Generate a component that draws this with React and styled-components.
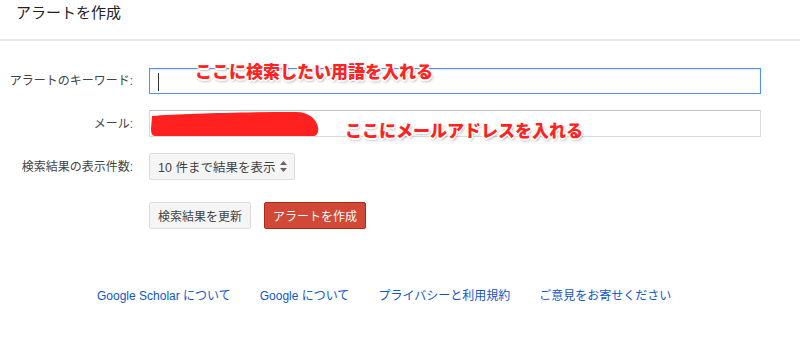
import React from 'react';
import styled, { createGlobalStyle } from 'styled-components';

const Global = createGlobalStyle`
  body {
    margin: 0;
    background: #fff;
    font-family: "Liberation Sans", "Noto Sans CJK JP", sans-serif;
    color: #444;
  }
`;

const Page = styled.div`
  position: relative;
  width: 800px;
  height: 343px;
  overflow: hidden;
`;

const Header = styled.div`
  height: 41px;
  border-bottom: 2px solid #ebebeb;
  display: flex;
  align-items: center;
  padding: 0 16px 14px;
  box-sizing: border-box;
`;

const Title = styled.h1`
  margin: 0;
  font-size: 15px;
  font-weight: normal;
  color: #222;
  line-height: 16px;
`;

const Form = styled.div`
  display: grid;
  grid-template-columns: 133px 612px;
  column-gap: 16px;
  row-gap: 16px;
  padding-top: 27px;
  align-items: center;
`;

const Label = styled.label`
  font-size: 12px;
  color: #444;
  text-align: right;
  line-height: 16px;
`;

const Field = styled.div`
  position: relative;
  height: ${p => (p.$tall ? 27 : 26)}px;
  box-sizing: border-box;
  border: 1px solid ${p => (p.$focus ? '#4d90fe' : '#d9d9d9')};
  border-top-color: ${p => (p.$focus ? '#4d90fe' : '#c0c0c0')};
  box-shadow: ${p => (p.$focus ? 'inset 0 1px 2px rgba(0,0,0,.1)' : 'none')};
  background: #fff;
`;

const Caret = styled.span`
  position: absolute;
  left: 8px;
  top: 4px;
  width: 1px;
  height: 18px;
  background: #333;
`;

const Scribble = styled.svg`
  position: absolute;
  left: 1px;
  top: 0;
`;

const Select = styled.div`
  justify-self: start;
  height: 27px;
  box-sizing: border-box;
  display: flex;
  align-items: center;
  gap: 5px;
  padding: 0 7px 0 8px;
  background: #f5f5f5;
  border: 1px solid #dcdcdc;
  border-radius: 2px;
  font-size: 12.5px;
  color: #444;
`;

const Arrows = styled.svg`
  display: block;
`;

const Buttons = styled.div`
  grid-column: 2;
  display: flex;
  gap: 13px;
  margin-top: 6px;
`;

const Button = styled.button`
  height: 27px;
  padding: 0 8px;
  min-width: 102px;
  border-radius: 2px;
  font-family: inherit;
  font-size: 12px;
  border: 1px solid ${p => (p.$primary ? '#b0281a' : '#dcdcdc')};
  background: ${p => (p.$primary ? '#d14836' : '#f5f5f5')};
  color: ${p => (p.$primary ? '#fff' : '#444')};
`;

const Footer = styled.div`
  display: flex;
  gap: 29px;
  padding-left: 97px;
  margin-top: 59px;
`;

const Link = styled.a`
  font-size: 12px;
  line-height: 16px;
  color: #1155cc;
  text-decoration: none;
`;

const Note = styled.div`
  position: absolute;
  left: ${p => p.$x}px;
  top: ${p => p.$y}px;
  font-family: "Noto Sans CJK JP", sans-serif;
  font-weight: 900;
  font-size: 17px;
  line-height: 20px;
  color: #ff2222;
  white-space: nowrap;
  text-shadow:
    -1px -1px 0 #fff, 1px -1px 0 #fff, -1px 1px 0 #fff, 1px 1px 0 #fff,
    0 -1.5px 0 #fff, 0 1.5px 0 #fff, -1.5px 0 0 #fff, 1.5px 0 0 #fff,
    1px 2px 3px rgba(0, 0, 0, 0.45);
`;

export default function App() {
  return (
    <Page>
      <Global />
      <Header>
        <Title>アラートを作成</Title>
      </Header>
      <Form>
        <Label>アラートのキーワード:</Label>
        <Field $focus>
          <Caret />
        </Field>
        <Label>メール:</Label>
        <Field $tall>
          <Scribble width="170" height="26" viewBox="0 0 170 26">
            <path
              d="M1 5 C30 3 90 1 145 1 C158 1 165 8 167 16 C168 21 166 25 162 25 L4 25 C1 25 0 22 0 18 Z"
              fill="#ff2020"
            />
          </Scribble>
        </Field>
        <Label>検索結果の表示件数:</Label>
        <Select>
          10 件まで結果を表示
          <Arrows width="7" height="11" viewBox="0 0 7 11">
            <path d="M3.5 0 L7 4 L0 4 Z M0 7 L7 7 L3.5 11 Z" fill="#666" />
          </Arrows>
        </Select>
        <Buttons>
          <Button>検索結果を更新</Button>
          <Button $primary>アラートを作成</Button>
        </Buttons>
      </Form>
      <Footer>
        <Link href="#">Google Scholar について</Link>
        <Link href="#">Google について</Link>
        <Link href="#">プライバシーと利用規約</Link>
        <Link href="#">ご意見をお寄せください</Link>
      </Footer>
      <Note $x={195} $y={61}>ここに検索したい用語を入れる</Note>
      <Note $x={345} $y={120}>ここにメールアドレスを入れる</Note>
    </Page>
  );
}
